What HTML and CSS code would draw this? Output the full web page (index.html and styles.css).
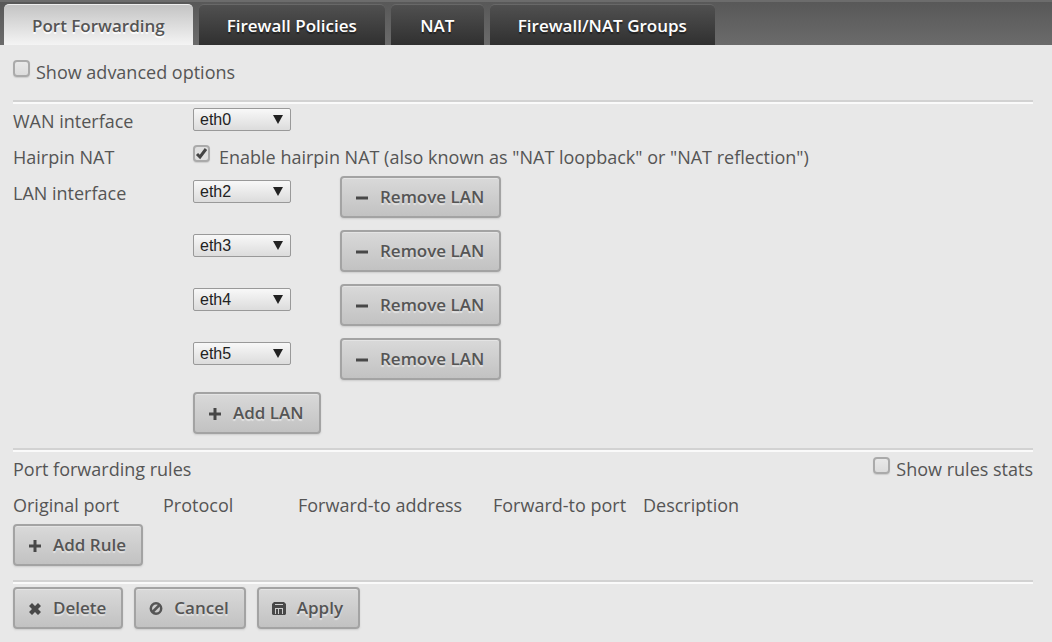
FILE: index.html
```html
<!DOCTYPE html>
<html lang="en">
<head>
    <meta charset="UTF-8">
    <meta name="viewport" content="width=device-width, initial-scale=1.0">
    <title>Port Forwarding</title>
    <link rel="stylesheet" href="styles.css">
</head>
<body>
    <nav class="tabs">
        <a href="#port-forwarding" class="tab active">Port Forwarding</a>
        <a href="#firewall-policies" class="tab">Firewall Policies</a>
        <a href="#nat" class="tab">NAT</a>
        <a href="#groups" class="tab">Firewall/NAT Groups</a>
    </nav>
    <form class="content">
        <div class="options">
            <label class="check"><input type="checkbox" name="advanced">Show advanced options</label>
        </div>

        <div class="section">
            <div class="field">
                <label for="wan">WAN interface</label>
                <select id="wan"><option>eth0</option></select>
            </div>
            <div class="field">
                <span>Hairpin NAT</span>
                <label class="check wide"><input type="checkbox" name="hairpin" checked>Enable hairpin NAT (also known as "NAT loopback" or "NAT reflection")</label>
            </div>
            <div class="field">
                <label for="lan1">LAN interface</label>
                <div class="lan-list">
                    <div class="lan">
                        <select id="lan1"><option>eth2</option></select>
                        <button type="button"><svg class="icon" viewBox="0 0 14 14"><path d="M1 5.500h12v3H1z"/></svg>Remove LAN</button>
                    </div>
                    <div class="lan">
                        <select aria-label="LAN interface 2"><option>eth3</option></select>
                        <button type="button"><svg class="icon" viewBox="0 0 14 14"><path d="M1 5.500h12v3H1z"/></svg>Remove LAN</button>
                    </div>
                    <div class="lan">
                        <select aria-label="LAN interface 3"><option>eth4</option></select>
                        <button type="button"><svg class="icon" viewBox="0 0 14 14"><path d="M1 5.500h12v3H1z"/></svg>Remove LAN</button>
                    </div>
                    <div class="lan">
                        <select aria-label="LAN interface 4"><option>eth5</option></select>
                        <button type="button"><svg class="icon" viewBox="0 0 14 14"><path d="M1 5.500h12v3H1z"/></svg>Remove LAN</button>
                    </div>
                    <button type="button"><svg class="icon" viewBox="0 0 14 14"><path d="M5.500 1h3v4.500H13v3H8.500V13h-3V8.500H1v-3h4.500z"/></svg>Add LAN</button>
                </div>
            </div>
        </div>

        <div class="section">
            <div class="rules-head">
                <span>Port forwarding rules</span>
                <label class="check"><input type="checkbox" name="stats">Show rules stats</label>
            </div>
            <table class="rules">
                <thead>
                    <tr>
                        <th class="col-port">Original port</th>
                        <th class="col-protocol">Protocol</th>
                        <th class="col-address">Forward-to address</th>
                        <th class="col-port">Forward-to port</th>
                        <th>Description</th>
                    </tr>
                </thead>
            </table>
            <button type="button"><svg class="icon" viewBox="0 0 14 14"><path d="M5.500 1h3v4.500H13v3H8.500V13h-3V8.500H1v-3h4.500z"/></svg>Add Rule</button>
        </div>

        <div class="section actions">
            <button type="button"><svg class="icon" viewBox="0 0 14 14"><path d="M4 1l3 3 3-3 3 3-3 3 3 3-3 3-3-3-3 3-3-3 3-3-3-3z"/></svg>Delete</button>
            <button type="button"><svg class="icon" viewBox="0 0 14 14"><circle class="line" cx="7" cy="6.500" r="5.200"/><path class="line" d="M3.500 10l7-7"/></svg>Cancel</button>
            <button type="submit"><svg class="icon" viewBox="0 0 14 14"><path fill-rule="evenodd" d="M2 0h10l2 2v10l-1 1H1l-1-1V2zM3 2v1h8V2zM3 6v6h1V6zM4 6v1h7V6zM6 7v5h1V7zM10 7v5h1V7z"/></svg>Apply</button>
        </div>
    </form>
</body>
</html>
```
FILE: styles.css
```css
* {
    box-sizing: border-box;
}
body {
    margin: 0;
    background: #e8e8e8;
    color: #555;
    font-family: "Open Sans", sans-serif;
    font-size: 18px;
    line-height: 34px;
}

/* tabs */
.tabs {
    display: flex;
    gap: 6px;
    padding: 2px 4px 0;
    border-top: 2px solid #6c6c6c;
    background: linear-gradient(#585858, #6b6b6b);
}
.tab {
    min-width: 93px;
    height: 41px;
    padding: 0 28px;
    border-top: 1px solid #686868;
    border-radius: 5px 5px 0 0;
    background: linear-gradient(#505050, #303030);
    color: #fff;
    font-size: 17px;
    font-weight: 600;
    line-height: 42px;
    text-align: center;
    text-decoration: none;
    text-shadow: 0 2px 1px #222;
}
.tab.active {
    border-top-color: #eee;
    background: linear-gradient(#c4c4c4, #f4f4f4);
    color: #555;
    text-shadow: 0 2px 1px #fff;
}

/* sections */
.content {
    padding: 10px 19px 13px 13px;
}
.options {
    height: 45px;
}
.section {
    padding-bottom: 14px;
    border-top: 2px solid #d2d2d2;
    box-shadow: inset 0 2px #fafafa;
    padding-top: 2px;
}
.field {
    display: grid;
    grid-template-columns: 180px 1fr;
    align-items: start;
    min-height: 36px;
}
.lan-list {
    display: flex;
    flex-direction: column;
    align-items: flex-start;
    gap: 12px;
}
.lan {
    display: grid;
    grid-template-columns: 147px auto;
    align-items: start;
}
.rules-head {
    display: flex;
    justify-content: space-between;
    min-height: 36px;
}
.rules {
    width: 100%;
    table-layout: fixed;
    border-collapse: collapse;
}
.rules th {
    padding: 0 0 2px;
    font-weight: normal;
    text-align: left;
}
.col-port {
    width: 150px;
}
.col-protocol {
    width: 135px;
}
.col-address {
    width: 195px;
}
.actions {
    display: flex;
    gap: 11px;
    padding-top: 5px;
    padding-bottom: 0;
}

/* controls */
select {
    appearance: none;
    width: 98px;
    height: 23px;
    margin: 4px 0 0;
    padding: 0 6px;
    border: 1px solid #999;
    border-radius: 2px;
    background: url("data:image/svg+xml,%3Csvg xmlns='http://www.w3.org/2000/svg' width='10' height='9'%3E%3Cpath d='M0 0h10L5 9z' fill='%23222'/%3E%3C/svg%3E") no-repeat right 7px center, linear-gradient(#f8f8f8, #dcdcdc);
    color: #222;
    font-family: "Liberation Sans", Arial, sans-serif;
    font-size: 16px;
    line-height: 20px;
}
.check {
    display: flex;
    align-items: flex-start;
    gap: 6px;
}
.check.wide {
    gap: 9px;
}
.check input {
    appearance: none;
    flex: none;
    width: 17px;
    height: 17px;
    margin: 5px 0 0;
    border: 2px solid #aaa;
    border-radius: 4px;
    background: linear-gradient(#e8e8e8, #dcdcdc);
    box-shadow: 0 1px 1px #ccc;
}
.check input:checked {
    background: url("data:image/svg+xml,%3Csvg xmlns='http://www.w3.org/2000/svg' width='13' height='13'%3E%3Cpath d='M2 7l3 3 6-8' fill='none' stroke='%23444' stroke-width='3'/%3E%3C/svg%3E") no-repeat center, #e0e0e0;
}
button {
    display: flex;
    align-items: center;
    gap: 11px;
    height: 42px;
    padding: 0 15px 2px 13px;
    border: 2px solid #a3a3a3;
    border-radius: 4px;
    background: linear-gradient(#d9d9d9, #c2c2c2);
    box-shadow: 0 1px 2px #ccc, inset 0 1px #e4e4e4;
    color: #555;
    font-family: inherit;
    font-size: 17px;
    font-weight: 600;
    text-shadow: 0 2px 1px #e4e4e4;
    cursor: pointer;
}
.icon {
    width: 14px;
    height: 14px;
    margin-top: 3px;
    fill: #484848;
}
.line {
    fill: none;
    stroke: #555;
    stroke-width: 2.5px;
}
```
